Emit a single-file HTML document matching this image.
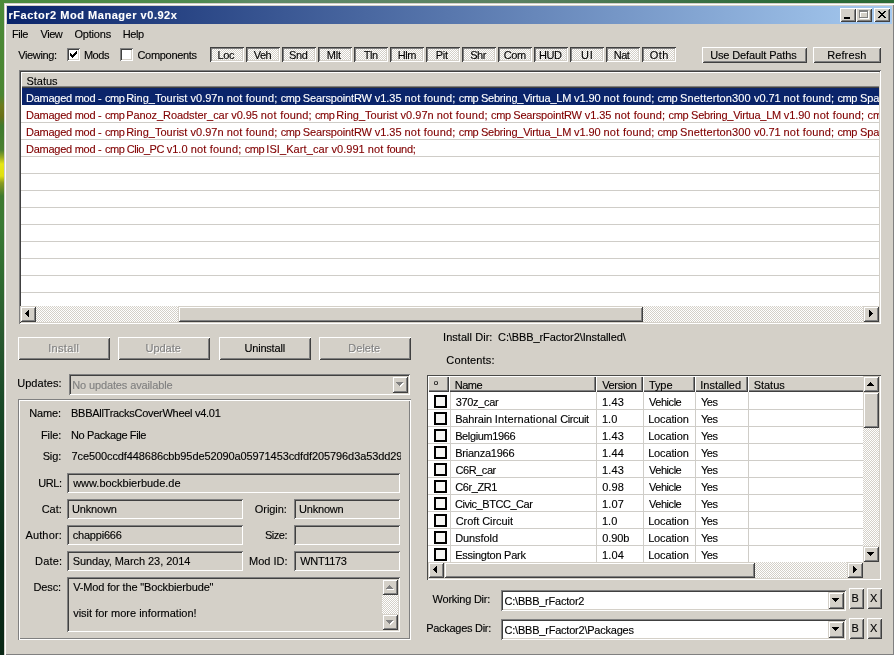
<!DOCTYPE html>
<html lang="en"><head><meta charset="utf-8"><title>rFactor2 Mod Manager v0.92x</title>
<style>
html,body{margin:0;padding:0}
body{width:894px;height:655px;overflow:hidden;position:relative;background:#3b7a2c;font-family:"Liberation Sans",sans-serif;font-size:11px;line-height:13px;color:#000}
div,span{box-sizing:border-box}
.a{position:absolute}
.root{left:0;top:0;width:894px;height:655px;overflow:hidden;will-change:transform}
.t{position:absolute;white-space:pre;height:13px;line-height:13px;-webkit-text-stroke:0.12px currentColor}
.desk-l{left:0;top:0;width:4px;height:655px;background:linear-gradient(to bottom,#4c8a38 0,#4a8532 95px,#6d7a1c 106px,#6a7018 116px,#3f7a2e 126px,#4a8030 150px,#a0b020 158px,#e6e616 164px,#e0e010 176px,#8a9a20 183px,#3f7a30 196px,#3a7a34 225px,#2f6a30 280px,#2a5a30 330px,#1a4a28 400px,#123a20 480px,#0a2a18 560px,#0a2816 655px)}
.desk-t{left:0;top:0;width:894px;height:3px;background:linear-gradient(to right,#4a8a3c 0,#4f8a50 200px,#5f8a68 260px,#5a8060 520px,#3a7044 700px,#2a6a38 800px,#2c6a36 894px)}
.win{left:4px;top:3px;width:891px;height:653px;background:#d4d0c8;box-shadow:inset 1px 1px 0 #d4d0c8,inset -1px -1px 0 #404040,inset 2px 2px 0 #fff,inset -2px -2px 0 #808080}
.cap{left:7px;top:6px;width:885px;height:18px;background:linear-gradient(to right,#0a246a,#a6caf0)}
.btn{position:absolute;background:#d4d0c8;box-shadow:inset 1px 1px 0 #fff,inset -1px -1px 0 #404040,inset 2px 2px 0 #d4d0c8,inset -2px -2px 0 #808080}
.sb{position:absolute;background:#d4d0c8;box-shadow:inset 1px 1px 0 #d4d0c8,inset -1px -1px 0 #404040,inset 2px 2px 0 #fff,inset -2px -2px 0 #808080}
.tog{position:absolute;background:conic-gradient(#fff 25%,#d4d0c8 0 50%,#fff 0 75%,#d4d0c8 0) 0 0/2px 2px;box-shadow:inset 1px 1px 0 #404040,inset -1px -1px 0 #fff,inset 2px 2px 0 #808080,inset -2px -2px 0 #d4d0c8}
.sunk{position:absolute;background:#fff;box-shadow:inset 1px 1px 0 #808080,inset -1px -1px 0 #fff,inset 2px 2px 0 #404040,inset -2px -2px 0 #d4d0c8}
.sunkg{position:absolute;background:#d4d0c8;box-shadow:inset 1px 1px 0 #808080,inset -1px -1px 0 #fff,inset 2px 2px 0 #404040,inset -2px -2px 0 #d4d0c8}
.sunk1{position:absolute;background:#fff;box-shadow:inset 1px 1px 0 #4a4a48,inset -1px -1px 0 #fff,inset -2px -2px 0 #d4d0c8}
.etch{position:absolute;box-shadow:inset 1px 1px 0 #808080,inset -1px -1px 0 #fff,inset 2px 2px 0 #fff,inset -2px -2px 0 #808080}
.chk{position:absolute;width:13px;height:13px;background:#fff;box-shadow:inset 1px 1px 0 #808080,inset -1px -1px 0 #fff,inset 2px 2px 0 #404040,inset -2px -2px 0 #d4d0c8}
.fchk{position:absolute;width:13px;height:13px;background:#f6f6f4;border:2px solid #000}
.dith{position:absolute;background:conic-gradient(#fff 25%,#d4d0c8 0 50%,#fff 0 75%,#d4d0c8 0) 0 0/2px 2px}
.face{position:absolute;background:#d4d0c8}
.hdr{position:absolute;background:#d4d0c8;box-shadow:inset 1px 1px 0 #fff,inset -1px -1px 0 #404040,inset -2px -2px 0 #808080}
.gl{position:absolute;background:#cfcdc8}
.dis{color:#808080;text-shadow:1px 1px 0 #fff}
.gry{color:#808080}
.red{color:#800000}
.sel{position:absolute;background:#0a246a}
.wh{color:#fff}
.clip{position:absolute;overflow:hidden}
svg{position:absolute;overflow:visible}
</style></head>
<body>
<div class="a root">
<div class="a desk-t"></div><div class="a desk-l"></div>
<div class="a win"></div>
<div class="a cap"></div>
<span class="t wh" style="left:8.45px;top:9px;letter-spacing:0.53px;font-weight:bold">rFactor2 Mod Manager v0.92x</span>
<div class="btn" style="left:840px;top:8px;width:16px;height:14px;"></div>
<div class="btn" style="left:856px;top:8px;width:16px;height:14px;"></div>
<div class="btn" style="left:874px;top:8px;width:16px;height:14px;"></div>
<span class="t " style="left:11.95px;top:28px;letter-spacing:-0.40px;">File</span>
<span class="t " style="left:40.53px;top:28px;letter-spacing:-0.45px;">View</span>
<span class="t " style="left:74.45px;top:28px;letter-spacing:-0.20px;">Options</span>
<span class="t " style="left:122.70px;top:28px;letter-spacing:-0.40px;">Help</span>
<span class="t " style="left:18.20px;top:49px;letter-spacing:-0.35px;">Viewing:</span>
<div class="chk" style="left:67px;top:48px;width:13px;height:13px;"></div>
<span class="t " style="left:83.90px;top:49px;letter-spacing:-0.45px;">Mods</span>
<div class="chk" style="left:120px;top:48px;width:13px;height:13px;"></div>
<span class="t " style="left:137.45px;top:49px;letter-spacing:-0.30px;">Components</span>
<div class="tog" style="left:210px;top:47px;width:34px;height:15px;"></div>
<span class="t " style="left:217.55px;top:49px;letter-spacing:-0.45px;">Loc</span>
<div class="tog" style="left:246px;top:47px;width:34px;height:15px;"></div>
<span class="t " style="left:253.67px;top:49px;letter-spacing:-0.45px;">Veh</span>
<div class="tog" style="left:282px;top:47px;width:34px;height:15px;"></div>
<span class="t " style="left:288.95px;top:49px;letter-spacing:-0.35px;">Snd</span>
<div class="tog" style="left:318px;top:47px;width:34px;height:15px;"></div>
<span class="t " style="left:326.70px;top:49px;letter-spacing:-0.10px;">Mlt</span>
<div class="tog" style="left:354px;top:47px;width:34px;height:15px;"></div>
<span class="t " style="left:363.80px;top:49px;letter-spacing:-0.45px;">Tln</span>
<div class="tog" style="left:390px;top:47px;width:34px;height:15px;"></div>
<span class="t " style="left:397.68px;top:49px;letter-spacing:-0.45px;">Hlm</span>
<div class="tog" style="left:426px;top:47px;width:34px;height:15px;"></div>
<span class="t " style="left:435.70px;top:49px;letter-spacing:-0.22px;">Pit</span>
<div class="tog" style="left:462px;top:47px;width:34px;height:15px;"></div>
<span class="t " style="left:470.18px;top:49px;letter-spacing:-0.45px;">Shr</span>
<div class="tog" style="left:498px;top:47px;width:34px;height:15px;"></div>
<span class="t " style="left:503.80px;top:49px;letter-spacing:-0.45px;">Com</span>
<div class="tog" style="left:534px;top:47px;width:34px;height:15px;"></div>
<span class="t " style="left:538.93px;top:49px;letter-spacing:-0.45px;">HUD</span>
<div class="tog" style="left:570px;top:47px;width:34px;height:15px;"></div>
<span class="t " style="left:581.03px;top:49px;letter-spacing:0.90px;">UI</span>
<div class="tog" style="left:606px;top:47px;width:34px;height:15px;"></div>
<span class="t " style="left:613.68px;top:49px;letter-spacing:-0.45px;">Nat</span>
<div class="tog" style="left:642px;top:47px;width:34px;height:15px;"></div>
<span class="t " style="left:649.85px;top:49px;letter-spacing:0.43px;">Oth</span>
<div class="btn" style="left:702px;top:47px;width:105px;height:16px;"></div>
<span class="t " style="left:710.20px;top:49px;letter-spacing:-0.13px;">Use Default Paths</span>
<div class="btn" style="left:813px;top:47px;width:68px;height:16px;"></div>
<span class="t " style="left:827.15px;top:49px;letter-spacing:0.12px;">Refresh</span>
<div class="sunk" style="left:19px;top:70px;width:862px;height:254px;"></div>
<div class="clip" style="left:21px;top:72px;width:858px;height:234px">
<div class="hdr" style="left:0;top:0;width:1100px;height:16px"></div>
<div class="sel" style="left:1px;top:16px;width:857px;height:17px"></div>
<div class="gl" style="left:0;top:50px;width:858px;height:1px"></div>
<div class="gl" style="left:0;top:67px;width:858px;height:1px"></div>
<div class="gl" style="left:0;top:84px;width:858px;height:1px"></div>
<div class="gl" style="left:0;top:101px;width:858px;height:1px"></div>
<div class="gl" style="left:0;top:118px;width:858px;height:1px"></div>
<div class="gl" style="left:0;top:135px;width:858px;height:1px"></div>
<div class="gl" style="left:0;top:152px;width:858px;height:1px"></div>
<div class="gl" style="left:0;top:169px;width:858px;height:1px"></div>
<div class="gl" style="left:0;top:186px;width:858px;height:1px"></div>
<div class="gl" style="left:0;top:203px;width:858px;height:1px"></div>
<div class="gl" style="left:0;top:220px;width:858px;height:1px"></div>
<span class="t " style="left:5.45px;top:3px;letter-spacing:-0.02px;">Status</span>
<span class="t wh" style="left:5.05px;top:20px;"><span style="letter-spacing:-0.26px">Damaged </span><span style="letter-spacing:-0.28px">mod </span><span style="letter-spacing:0.08px">- </span><span style="letter-spacing:-0.42px;word-spacing:-0.96px">cmp </span><span style="letter-spacing:0.01px">Ring_Tourist </span><span style="letter-spacing:0.02px">v0.97n </span><span style="letter-spacing:0.16px">not </span><span style="letter-spacing:0.19px">found; </span><span style="letter-spacing:-0.42px;word-spacing:-0.06px">cmp </span><span style="letter-spacing:-0.14px">SearspointRW </span><span style="letter-spacing:-0.04px">v1.35 </span><span style="letter-spacing:0.24px">not </span><span style="letter-spacing:0.19px">found; </span><span style="letter-spacing:-0.42px;word-spacing:-0.06px">cmp </span><span style="letter-spacing:-0.22px">Sebring_Virtua_LM </span><span style="letter-spacing:-0.09px">v1.90 </span><span style="letter-spacing:0.31px">not </span><span style="letter-spacing:0.13px">found; </span><span style="letter-spacing:-0.34px">cmp </span><span style="letter-spacing:0.13px">Snetterton300 </span><span style="letter-spacing:-0.10px">v0.71 </span><span style="letter-spacing:0.26px">not </span><span style="letter-spacing:0.13px">found; </span><span style="letter-spacing:-0.34px">cmp </span><span style="letter-spacing:-0.06px">Spa-</span></span>
<span class="t red" style="left:5.05px;top:37px;"><span style="letter-spacing:-0.26px">Damaged </span><span style="letter-spacing:-0.28px">mod </span><span style="letter-spacing:0.08px">- </span><span style="letter-spacing:-0.42px;word-spacing:-0.96px">cmp </span><span style="letter-spacing:-0.07px">Panoz_Roadster_car </span><span style="letter-spacing:-0.09px">v0.95 </span><span style="letter-spacing:0.31px">not </span><span style="letter-spacing:0.16px">found; </span><span style="letter-spacing:-0.42px;word-spacing:-0.96px">cmp </span><span style="letter-spacing:0.01px">Ring_Tourist </span><span style="letter-spacing:0.02px">v0.97n </span><span style="letter-spacing:0.16px">not </span><span style="letter-spacing:0.23px">found; </span><span style="letter-spacing:-0.41px">cmp </span><span style="letter-spacing:-0.18px">SearspointRW </span><span style="letter-spacing:-0.04px">v1.35 </span><span style="letter-spacing:0.21px">not </span><span style="letter-spacing:0.19px">found; </span><span style="letter-spacing:-0.34px">cmp </span><span style="letter-spacing:-0.24px">Sebring_Virtua_LM </span><span style="letter-spacing:-0.09px">v1.90 </span><span style="letter-spacing:0.31px">not </span><span style="letter-spacing:0.14px">found; </span><span style="letter-spacing:-0.06px">cmp</span></span>
<span class="t red" style="left:5.05px;top:54px;"><span style="letter-spacing:-0.26px">Damaged </span><span style="letter-spacing:-0.28px">mod </span><span style="letter-spacing:0.08px">- </span><span style="letter-spacing:-0.42px;word-spacing:-0.96px">cmp </span><span style="letter-spacing:0.01px">Ring_Tourist </span><span style="letter-spacing:0.02px">v0.97n </span><span style="letter-spacing:0.16px">not </span><span style="letter-spacing:0.19px">found; </span><span style="letter-spacing:-0.42px;word-spacing:-0.06px">cmp </span><span style="letter-spacing:-0.14px">SearspointRW </span><span style="letter-spacing:-0.04px">v1.35 </span><span style="letter-spacing:0.24px">not </span><span style="letter-spacing:0.19px">found; </span><span style="letter-spacing:-0.42px;word-spacing:-0.06px">cmp </span><span style="letter-spacing:-0.22px">Sebring_Virtua_LM </span><span style="letter-spacing:-0.09px">v1.90 </span><span style="letter-spacing:0.31px">not </span><span style="letter-spacing:0.13px">found; </span><span style="letter-spacing:-0.34px">cmp </span><span style="letter-spacing:0.13px">Snetterton300 </span><span style="letter-spacing:-0.10px">v0.71 </span><span style="letter-spacing:0.26px">not </span><span style="letter-spacing:0.13px">found; </span><span style="letter-spacing:-0.34px">cmp </span><span style="letter-spacing:-0.06px">Spa-</span></span>
<span class="t red" style="left:5.05px;top:71px;"><span style="letter-spacing:-0.26px">Damaged </span><span style="letter-spacing:-0.28px">mod </span><span style="letter-spacing:0.08px">- </span><span style="letter-spacing:-0.42px;word-spacing:-0.46px">cmp </span><span style="letter-spacing:-0.42px;word-spacing:-0.05px">Clio_PC </span><span style="letter-spacing:0.04px">v1.0 </span><span style="letter-spacing:0.16px">not </span><span style="letter-spacing:0.19px">found; </span><span style="letter-spacing:-0.42px;word-spacing:-0.56px">cmp </span><span style="letter-spacing:0.08px">ISI_Kart_car </span><span style="letter-spacing:0.01px">v0.991 </span><span style="letter-spacing:0.19px">not </span><span style="letter-spacing:-0.34px">found;</span></span>
</div>
<div class="dith" style="left:20px;top:306px;width:859px;height:16px;"></div>
<div class="sb" style="left:20px;top:306px;width:16px;height:16px;"></div>
<div class="sb" style="left:863px;top:306px;width:16px;height:16px;"></div>
<div class="sb" style="left:178px;top:306px;width:465px;height:16px;"></div>
<div class="btn" style="left:18px;top:337px;width:92px;height:23px;"></div>
<span class="t dis" style="left:48.25px;top:342px;letter-spacing:0.31px;">Install</span>
<div class="btn" style="left:118px;top:337px;width:92px;height:23px;"></div>
<span class="t dis" style="left:145.50px;top:342px;letter-spacing:-0.04px;">Update</span>
<div class="btn" style="left:219px;top:337px;width:92px;height:23px;"></div>
<span class="t " style="left:244.50px;top:342px;letter-spacing:-0.20px;">Uninstall</span>
<div class="btn" style="left:319px;top:337px;width:92px;height:23px;"></div>
<span class="t dis" style="left:348.35px;top:342px;letter-spacing:0.00px;">Delete</span>
<span class="t " style="left:17.20px;top:377px;letter-spacing:0.04px;">Updates:</span>
<div class="sunkg" style="left:69px;top:374px;width:341px;height:21px;"></div>
<span class="t gry" style="left:72.15px;top:379px;letter-spacing:-0.12px;">No updates available</span>
<div class="sb" style="left:392px;top:376px;width:16px;height:17px;"></div>
<div class="etch" style="left:18px;top:399px;width:393px;height:241px;"></div>
<span class="t " style="left:29.15px;top:407px;letter-spacing:-0.09px;">Name:</span>
<span class="t " style="left:71.05px;top:407px;letter-spacing:-0.28px;">BBBAllTracksCoverWheel v4.01</span>
<span class="t " style="left:40.95px;top:429px;letter-spacing:-0.10px;">File:</span>
<span class="t " style="left:71.05px;top:429px;letter-spacing:-0.38px;">No Package File</span>
<span class="t " style="left:42.65px;top:450px;letter-spacing:-0.12px;">Sig:</span>
<div class="clip" style="left:69px;top:448px;width:332px;height:16px">
<span class="t " style="left:2.55px;top:2px;"><span style="letter-spacing:-0.10px">7ce500ccdf448686cbb95de52090a05971453cdfdf205796d3a53dd2</span><span style="letter-spacing:-0.10px">9</span></span>
</div>
<span class="t " style="left:38.28px;top:477px;letter-spacing:-0.45px;">URL:</span>
<div class="sunkg" style="left:67px;top:473px;width:333px;height:20px;"></div>
<span class="t " style="left:73.15px;top:477px;letter-spacing:-0.01px;">www.bockbierbude.de</span>
<span class="t " style="left:41.65px;top:503px;letter-spacing:-0.03px;">Cat:</span>
<div class="sunkg" style="left:67px;top:499px;width:176px;height:20px;"></div>
<span class="t " style="left:72.00px;top:503px;letter-spacing:-0.17px;">Unknown</span>
<span class="t " style="left:254.75px;top:503px;letter-spacing:-0.04px;">Origin:</span>
<div class="sunkg" style="left:294px;top:499px;width:106px;height:20px;"></div>
<span class="t " style="left:299.00px;top:503px;letter-spacing:-0.19px;">Unknown</span>
<span class="t " style="left:25.45px;top:529px;letter-spacing:0.14px;">Author:</span>
<div class="sunkg" style="left:67px;top:525px;width:176px;height:20px;"></div>
<span class="t " style="left:72.65px;top:529px;letter-spacing:-0.19px;">chappi666</span>
<span class="t " style="left:264.88px;top:529px;letter-spacing:-0.45px;">Size:</span>
<div class="sunkg" style="left:294px;top:525px;width:106px;height:20px;"></div>
<span class="t " style="left:35.05px;top:555px;letter-spacing:0.17px;">Date:</span>
<div class="sunkg" style="left:67px;top:551px;width:176px;height:20px;"></div>
<span class="t " style="left:72.65px;top:555px;letter-spacing:-0.06px;">Sunday, March 23, 2014</span>
<span class="t " style="left:249.05px;top:555px;letter-spacing:-0.01px;">Mod ID:</span>
<div class="sunkg" style="left:294px;top:551px;width:106px;height:20px;"></div>
<span class="t " style="left:300.25px;top:555px;letter-spacing:-0.35px;">WNT1173</span>
<span class="t " style="left:33.45px;top:581px;letter-spacing:-0.10px;">Desc:</span>
<div class="sunkg" style="left:67px;top:577px;width:333px;height:55px;"></div>
<span class="t " style="left:73.15px;top:581px;letter-spacing:-0.14px;">V-Mod for the "Bockbierbude"</span>
<span class="t " style="left:73.15px;top:607px;letter-spacing:-0.00px;">visit for more information!</span>
<div class="dith" style="left:382px;top:579px;width:16px;height:51px;"></div>
<div class="sb" style="left:382px;top:579px;width:16px;height:16px;"></div>
<div class="sb" style="left:382px;top:614px;width:16px;height:16px;"></div>
<span class="t " style="left:443.05px;top:331px;letter-spacing:0.04px;">Install Dir:</span>
<span class="t " style="left:498.05px;top:331px;letter-spacing:-0.10px;">C:\BBB_rFactor2\Installed\</span>
<span class="t " style="left:446.35px;top:354px;letter-spacing:0.13px;">Contents:</span>
<div class="sunk1" style="left:427px;top:375px;width:454px;height:205px;"></div>
<div class="clip" style="left:428px;top:376px;width:435px;height:186px">
<div class="hdr" style="left:0px;top:0;width:21px;height:16px"></div>
<div class="hdr" style="left:21px;top:0;width:147px;height:16px"></div>
<div class="hdr" style="left:168px;top:0;width:47px;height:16px"></div>
<div class="hdr" style="left:215px;top:0;width:52px;height:16px"></div>
<div class="hdr" style="left:267px;top:0;width:53px;height:16px"></div>
<div class="hdr" style="left:320px;top:0;width:252px;height:16px"></div>
<div class="gl" style="left:0;top:33px;width:435px;height:1px"></div>
<div class="gl" style="left:0;top:50px;width:435px;height:1px"></div>
<div class="gl" style="left:0;top:67px;width:435px;height:1px"></div>
<div class="gl" style="left:0;top:84px;width:435px;height:1px"></div>
<div class="gl" style="left:0;top:101px;width:435px;height:1px"></div>
<div class="gl" style="left:0;top:118px;width:435px;height:1px"></div>
<div class="gl" style="left:0;top:135px;width:435px;height:1px"></div>
<div class="gl" style="left:0;top:152px;width:435px;height:1px"></div>
<div class="gl" style="left:0;top:169px;width:435px;height:1px"></div>
<div class="gl" style="left:0;top:186px;width:435px;height:1px"></div>
<div class="gl" style="left:22px;top:16px;width:1px;height:170px"></div>
<div class="gl" style="left:168px;top:16px;width:1px;height:170px"></div>
<div class="gl" style="left:215px;top:16px;width:1px;height:170px"></div>
<div class="gl" style="left:267px;top:16px;width:1px;height:170px"></div>
<div class="gl" style="left:320px;top:16px;width:1px;height:170px"></div>
<span class="t " style="left:5.77px;top:0px;letter-spacing:0.00px;font-size:8px">o</span>
<span class="t " style="left:26.70px;top:3px;letter-spacing:-0.45px;">Name</span>
<span class="t " style="left:174.15px;top:3px;letter-spacing:-0.31px;">Version</span>
<span class="t " style="left:220.90px;top:3px;letter-spacing:-0.07px;">Type</span>
<span class="t " style="left:272.35px;top:3px;letter-spacing:-0.04px;">Installed</span>
<span class="t " style="left:325.65px;top:3px;letter-spacing:-0.02px;">Status</span>
<div class="fchk" style="left:6px;top:19px"></div>
<span class="t " style="left:27.65px;top:20px;letter-spacing:-0.32px;">370z_car</span>
<span class="t " style="left:173.90px;top:20px;letter-spacing:0.17px;">1.43</span>
<span class="t " style="left:220.98px;top:20px;letter-spacing:-0.45px;">Vehicle</span>
<span class="t " style="left:272.90px;top:20px;letter-spacing:-0.45px;">Yes</span>
<div class="fchk" style="left:6px;top:36px"></div>
<span class="t " style="left:27.15px;top:37px;"><span style="letter-spacing:-0.16px">Bahrain </span><span style="letter-spacing:0.12px">International </span><span style="letter-spacing:-0.36px">Circuit</span></span>
<span class="t " style="left:173.90px;top:37px;letter-spacing:0.05px;">1.0</span>
<span class="t " style="left:220.15px;top:37px;letter-spacing:-0.14px;">Location</span>
<span class="t " style="left:272.90px;top:37px;letter-spacing:-0.45px;">Yes</span>
<div class="fchk" style="left:6px;top:53px"></div>
<span class="t " style="left:27.15px;top:54px;letter-spacing:-0.38px;">Belgium1966</span>
<span class="t " style="left:173.90px;top:54px;letter-spacing:0.17px;">1.43</span>
<span class="t " style="left:220.15px;top:54px;letter-spacing:-0.14px;">Location</span>
<span class="t " style="left:272.90px;top:54px;letter-spacing:-0.45px;">Yes</span>
<div class="fchk" style="left:6px;top:70px"></div>
<span class="t " style="left:27.15px;top:71px;letter-spacing:-0.23px;">Brianza1966</span>
<span class="t " style="left:173.90px;top:71px;letter-spacing:0.17px;">1.44</span>
<span class="t " style="left:220.15px;top:71px;letter-spacing:-0.14px;">Location</span>
<span class="t " style="left:272.90px;top:71px;letter-spacing:-0.45px;">Yes</span>
<div class="fchk" style="left:6px;top:87px"></div>
<span class="t " style="left:27.55px;top:88px;letter-spacing:-0.45px;">C6R_car</span>
<span class="t " style="left:173.90px;top:88px;letter-spacing:0.17px;">1.43</span>
<span class="t " style="left:220.98px;top:88px;letter-spacing:-0.45px;">Vehicle</span>
<span class="t " style="left:272.90px;top:88px;letter-spacing:-0.45px;">Yes</span>
<div class="fchk" style="left:6px;top:104px"></div>
<span class="t " style="left:27.37px;top:105px;letter-spacing:-0.45px;">C6r_ZR1</span>
<span class="t " style="left:174.15px;top:105px;letter-spacing:0.08px;">0.98</span>
<span class="t " style="left:220.98px;top:105px;letter-spacing:-0.45px;">Vehicle</span>
<span class="t " style="left:272.90px;top:105px;letter-spacing:-0.45px;">Yes</span>
<div class="fchk" style="left:6px;top:121px"></div>
<span class="t " style="left:27.00px;top:122px;letter-spacing:-0.45px;">Civic_BTCC_Car</span>
<span class="t " style="left:173.90px;top:122px;letter-spacing:0.17px;">1.07</span>
<span class="t " style="left:220.98px;top:122px;letter-spacing:-0.45px;">Vehicle</span>
<span class="t " style="left:272.90px;top:122px;letter-spacing:-0.45px;">Yes</span>
<div class="fchk" style="left:6px;top:138px"></div>
<span class="t " style="left:27.65px;top:139px;letter-spacing:-0.06px;">Croft Circuit</span>
<span class="t " style="left:173.90px;top:139px;letter-spacing:0.05px;">1.0</span>
<span class="t " style="left:220.15px;top:139px;letter-spacing:-0.14px;">Location</span>
<span class="t " style="left:272.90px;top:139px;letter-spacing:-0.45px;">Yes</span>
<div class="fchk" style="left:6px;top:155px"></div>
<span class="t " style="left:27.15px;top:156px;letter-spacing:-0.07px;">Dunsfold</span>
<span class="t " style="left:174.15px;top:156px;letter-spacing:-0.09px;">0.90b</span>
<span class="t " style="left:220.15px;top:156px;letter-spacing:-0.14px;">Location</span>
<span class="t " style="left:272.90px;top:156px;letter-spacing:-0.45px;">Yes</span>
<div class="fchk" style="left:6px;top:172px"></div>
<span class="t " style="left:27.15px;top:173px;letter-spacing:-0.24px;">Essington Park</span>
<span class="t " style="left:173.90px;top:173px;letter-spacing:0.17px;">1.04</span>
<span class="t " style="left:220.15px;top:173px;letter-spacing:-0.14px;">Location</span>
<span class="t " style="left:272.90px;top:173px;letter-spacing:-0.45px;">Yes</span>
</div>
<div class="face" style="left:863px;top:376px;width:17px;height:203px;"></div>
<div class="face" style="left:428px;top:562px;width:452px;height:17px;"></div>
<div class="dith" style="left:863px;top:376px;width:16px;height:186px;"></div>
<div class="sb" style="left:863px;top:376px;width:16px;height:16px;"></div>
<div class="sb" style="left:863px;top:392px;width:16px;height:36px;"></div>
<div class="sb" style="left:863px;top:546px;width:16px;height:16px;"></div>
<div class="dith" style="left:428px;top:562px;width:435px;height:16px;"></div>
<div class="sb" style="left:428px;top:562px;width:16px;height:16px;"></div>
<div class="sb" style="left:444px;top:562px;width:311px;height:16px;"></div>
<div class="sb" style="left:847px;top:562px;width:16px;height:16px;"></div>
<span class="t " style="left:432.55px;top:593px;letter-spacing:-0.23px;">Working Dir:</span>
<div class="sunk" style="left:501px;top:590px;width:345px;height:21px;"></div>
<span class="t " style="left:504.55px;top:595px;letter-spacing:-0.23px;">C:\BBB_rFactor2</span>
<div class="sb" style="left:828px;top:592px;width:16px;height:17px;"></div>
<div class="btn" style="left:849px;top:588px;width:15px;height:21px;"></div>
<span class="t " style="left:851.62px;top:592px;letter-spacing:0.00px;">B</span>
<div class="btn" style="left:867px;top:588px;width:15px;height:21px;"></div>
<span class="t " style="left:869.88px;top:592px;letter-spacing:0.00px;">X</span>
<span class="t " style="left:426.15px;top:622px;letter-spacing:-0.28px;">Packages Dir:</span>
<div class="sunk" style="left:501px;top:619px;width:345px;height:21px;"></div>
<span class="t " style="left:504.55px;top:624px;letter-spacing:-0.22px;">C:\BBB_rFactor2\Packages</span>
<div class="sb" style="left:828px;top:621px;width:16px;height:17px;"></div>
<div class="btn" style="left:849px;top:618px;width:15px;height:21px;"></div>
<span class="t " style="left:851.62px;top:622px;letter-spacing:0.00px;">B</span>
<div class="btn" style="left:867px;top:618px;width:15px;height:21px;"></div>
<span class="t " style="left:869.88px;top:622px;letter-spacing:0.00px;">X</span>
<svg class="a" style="left:0;top:0" width="894" height="655" viewBox="0 0 894 655" shape-rendering="crispEdges"><rect x="844" y="17" width="6" height="2" fill="#000"/><g fill="#fff"><rect x="860" y="11" width="9" height="2"/><rect x="860" y="11" width="1" height="8"/><rect x="868" y="11" width="1" height="8"/><rect x="860" y="18" width="9" height="1"/></g><g fill="#808080"><rect x="859" y="10" width="9" height="2"/><rect x="859" y="10" width="1" height="8"/><rect x="867" y="10" width="1" height="8"/><rect x="859" y="17" width="9" height="1"/></g><g fill="#000"><rect x="878" y="11" width="2" height="1"/><rect x="884" y="11" width="2" height="1"/><rect x="879" y="12" width="2" height="1"/><rect x="883" y="12" width="2" height="1"/><rect x="880" y="13" width="4" height="1"/><rect x="881" y="14" width="2" height="1"/><rect x="880" y="15" width="4" height="1"/><rect x="879" y="16" width="2" height="1"/><rect x="883" y="16" width="2" height="1"/><rect x="878" y="17" width="2" height="1"/><rect x="884" y="17" width="2" height="1"/></g><g fill="#000"><rect x="70" y="53" width="1" height="3"/><rect x="71" y="54" width="1" height="3"/><rect x="72" y="55" width="1" height="3"/><rect x="73" y="54" width="1" height="3"/><rect x="74" y="53" width="1" height="3"/><rect x="75" y="52" width="1" height="3"/><rect x="76" y="51" width="1" height="3"/></g><g fill="#000"><rect x="28" y="310" width="1" height="7"/><rect x="27" y="311" width="1" height="5"/><rect x="26" y="312" width="1" height="3"/><rect x="25" y="313" width="1" height="1"/></g><g fill="#000"><rect x="869" y="310" width="1" height="7"/><rect x="870" y="311" width="1" height="5"/><rect x="871" y="312" width="1" height="3"/><rect x="872" y="313" width="1" height="1"/></g><g fill="#fff"><rect x="397" y="383" width="7" height="1"/><rect x="398" y="384" width="5" height="1"/><rect x="399" y="385" width="3" height="1"/><rect x="400" y="386" width="1" height="1"/></g><g fill="#808080"><rect x="396" y="382" width="7" height="1"/><rect x="397" y="383" width="5" height="1"/><rect x="398" y="384" width="3" height="1"/><rect x="399" y="385" width="1" height="1"/></g><g fill="#fff"><rect x="390" y="586" width="1" height="1"/><rect x="389" y="587" width="3" height="1"/><rect x="388" y="588" width="5" height="1"/><rect x="387" y="589" width="7" height="1"/></g><g fill="#808080"><rect x="389" y="585" width="1" height="1"/><rect x="388" y="586" width="3" height="1"/><rect x="387" y="587" width="5" height="1"/><rect x="386" y="588" width="7" height="1"/></g><g fill="#fff"><rect x="387" y="621" width="7" height="1"/><rect x="388" y="622" width="5" height="1"/><rect x="389" y="623" width="3" height="1"/><rect x="390" y="624" width="1" height="1"/></g><g fill="#808080"><rect x="386" y="620" width="7" height="1"/><rect x="387" y="621" width="5" height="1"/><rect x="388" y="622" width="3" height="1"/><rect x="389" y="623" width="1" height="1"/></g><g fill="#000"><rect x="870" y="382" width="1" height="1"/><rect x="869" y="383" width="3" height="1"/><rect x="868" y="384" width="5" height="1"/><rect x="867" y="385" width="7" height="1"/></g><g fill="#000"><rect x="867" y="552" width="7" height="1"/><rect x="868" y="553" width="5" height="1"/><rect x="869" y="554" width="3" height="1"/><rect x="870" y="555" width="1" height="1"/></g><g fill="#000"><rect x="436" y="566" width="1" height="7"/><rect x="435" y="567" width="1" height="5"/><rect x="434" y="568" width="1" height="3"/><rect x="433" y="569" width="1" height="1"/></g><g fill="#000"><rect x="853" y="566" width="1" height="7"/><rect x="854" y="567" width="1" height="5"/><rect x="855" y="568" width="1" height="3"/><rect x="856" y="569" width="1" height="1"/></g><g fill="#000"><rect x="832" y="598" width="7" height="1"/><rect x="833" y="599" width="5" height="1"/><rect x="834" y="600" width="3" height="1"/><rect x="835" y="601" width="1" height="1"/></g><g fill="#000"><rect x="832" y="627" width="7" height="1"/><rect x="833" y="628" width="5" height="1"/><rect x="834" y="629" width="3" height="1"/><rect x="835" y="630" width="1" height="1"/></g></svg>
</div>
</body></html>
